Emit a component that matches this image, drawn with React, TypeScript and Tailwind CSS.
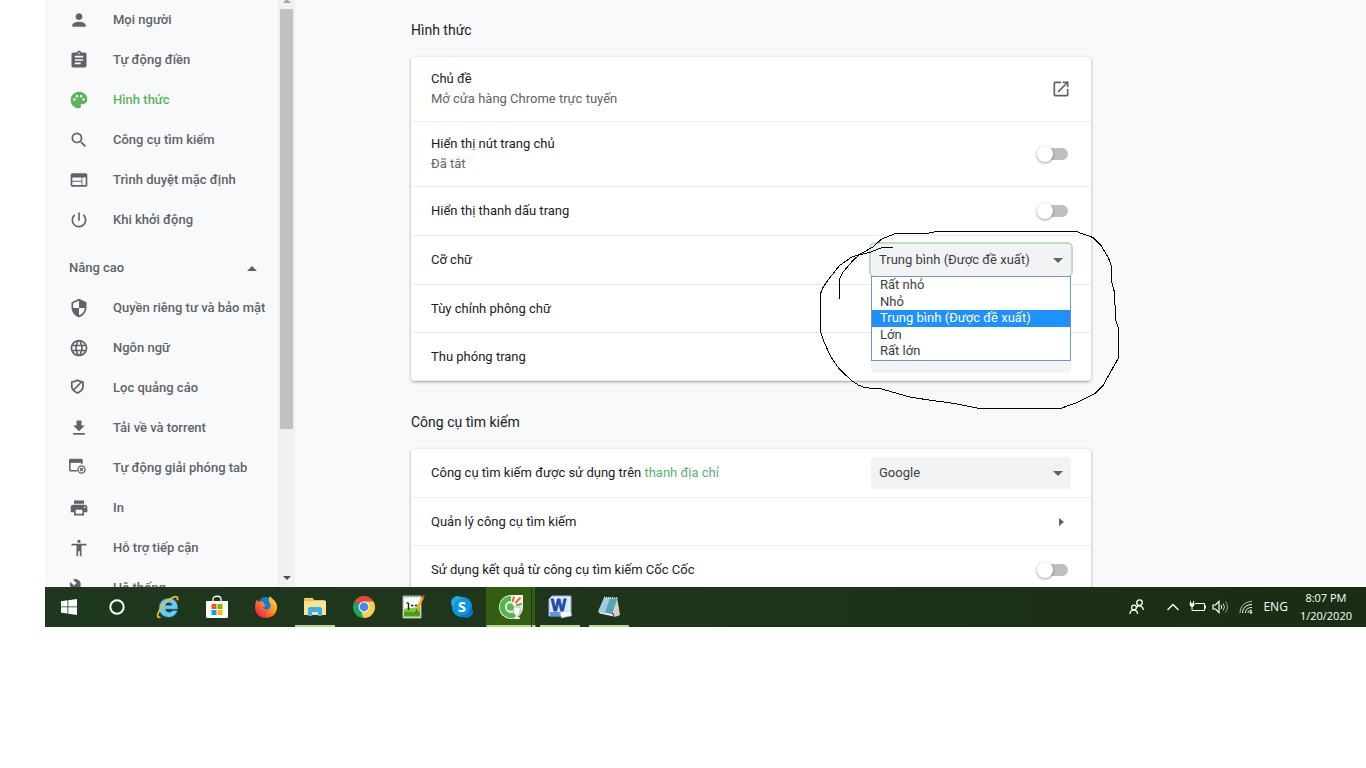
import React, { useState } from "react";
import {
  MdAccessibility,
  MdAssignment,
  MdBuild,
  MdFileDownload,
  MdLanguage,
  MdOpenInNew,
  MdPalette,
  MdPerson,
  MdPowerSettingsNew,
  MdPrint,
  MdSearch,
  MdSecurity,
  MdWeb,
} from "react-icons/md";

const AdBlockIcon = () => (
  <svg width="20" height="20" viewBox="0 0 20 20" fill="none" stroke="currentColor" strokeWidth="1.7">
    <path d="M8.5 2.300C6.500 3.500 5 3.900 2.800 4v4.500c0 2.800 2.300 4.900 5.700 6.600 3.400-1.700 5.500-3.800 5.500-6.600V4c-2.200-.1-3.500-.5-5.500-1.700z" />
    <path d="m4.500 12 8-8" />
  </svg>
);

const TabReleaseIcon = () => (
  <svg width="20" height="20" viewBox="0 0 20 20" fill="none" stroke="currentColor">
    <path d="M8 12.7H1.5A.8.8 0 0 1 .8 12V2.500h12V6" strokeWidth="1.500" />
    <path d="M.8 1.300h12v3H.8z" fill="currentColor" />
    <circle cx="12.500" cy="11.500" r="3.600" strokeWidth="1.300" />
    <path d="m11 10 3 3m0-3-3 3" strokeWidth="1.300" />
  </svg>
);

const basicItems = [
  { label: "Mọi người", icon: <MdPerson size={20} /> },
  { label: "Tự động điền", icon: <MdAssignment size={20} /> },
  { label: "Hình thức", icon: <MdPalette size={20} />, active: true },
  { label: "Công cụ tìm kiếm", icon: <MdSearch size={20} /> },
  { label: "Trình duyệt mặc định", icon: <MdWeb size={20} /> },
  { label: "Khi khởi động", icon: <MdPowerSettingsNew size={20} /> },
];

const advancedItems = [
  { label: "Quyền riêng tư và bảo mật", icon: <MdSecurity size={20} /> },
  { label: "Ngôn ngữ", icon: <MdLanguage size={20} /> },
  { label: "Lọc quảng cáo", icon: <AdBlockIcon /> },
  { label: "Tải về và torrent", icon: <MdFileDownload size={20} /> },
  { label: "Tự động giải phóng tab", icon: <TabReleaseIcon /> },
  { label: "In", icon: <MdPrint size={20} /> },
  { label: "Hỗ trợ tiếp cận", icon: <MdAccessibility size={20} /> },
  { label: "Hệ thống", icon: <MdBuild size={20} /> },
];

const fontSizes = ["Rất nhỏ", "Nhỏ", "Trung bình (Được đề xuất)", "Lớn", "Rất lớn"];

type NavItem = { label: string; icon: React.ReactNode; active?: boolean };

const NavLink: React.FC<{ item: NavItem }> = ({ item }) => (
  <a
    href="#"
    className={`flex h-10 items-center gap-6 pl-6 whitespace-nowrap ${
      item.active ? "text-[#5bb55b]" : "text-[#5f6368]"
    }`}
  >
    <span className="shrink-0">{item.icon}</span>
    {item.label}
  </a>
);

const Sidebar: React.FC = () => (
  <div className="flex w-[250px] shrink-0 overflow-hidden [contain:size]">
    <nav className="min-w-0 flex-1 text-[13px] leading-5 font-medium">
      {basicItems.map((item) => (
        <NavLink key={item.label} item={item} />
      ))}
      <button className="mt-2 flex h-10 w-full items-center justify-between pr-[21px] pl-6 text-[#5f6368]">
        Nâng cao
        <svg width="10" height="5" viewBox="0 0 10 5" fill="currentColor">
          <path d="M0 5 5 0l5 5z" />
        </svg>
      </button>
      {advancedItems.map((item) => (
        <NavLink key={item.label} item={item} />
      ))}
    </nav>

    {/* Scroll bar */}
    <div className="flex w-[17px] flex-col items-center bg-[#f1f1f1]">
      <svg className="mb-[5px]" width="8" height="4" viewBox="0 0 8 4" fill="#a3a3a3">
        <path d="M0 3 3 0h2l3 3z" />
      </svg>
      <div className="h-[420px] w-[13px] bg-[#c1c1c1]" />
      <svg className="mt-auto mb-[7px]" width="8" height="4" viewBox="0 0 8 4" fill="#505050">
        <path d="M0 0h8L4 4z" />
      </svg>
    </div>
  </div>
);

const Toggle: React.FC<{ id: string }> = ({ id }) => (
  <input
    id={id}
    type="checkbox"
    className="relative mr-[3px] h-3 w-7 appearance-none rounded-full bg-[#bdbfc1] before:absolute before:-top-0.5 before:-left-[3px] before:size-4 before:rounded-full before:bg-white before:shadow-[0_1px_3px_rgba(0,0,0,0.4)]"
  />
);

type SelectProps = {
  id: string;
  options: string[];
  value?: string;
  onChange?: (value: string) => void;
  open?: boolean;
};

const Select: React.FC<SelectProps> = ({ id, options, value, onChange, open }) => (
  <div className="relative w-[200px]">
    <select
      id={id}
      value={value}
      onChange={(e) => onChange?.(e.target.value)}
      className={`h-8 w-full appearance-none rounded bg-[#f1f3f4] pr-8 pl-2 text-[13px] text-[#3c4043] outline-none ${
        open ? "ring-2 ring-[#bcdfbc]" : ""
      }`}
    >
      {options.map((o) => (
        <option key={o}>{o}</option>
      ))}
    </select>
    <svg
      className="pointer-events-none absolute top-[14px] right-2"
      width="10"
      height="5"
      viewBox="0 0 10 5"
      fill="#5f6368"
    >
      <path d="M0 0h10L5 5z" />
    </svg>
    {open && (
      <ul
        role="listbox"
        className="absolute top-8 left-0 z-10 grid h-[85px] w-full auto-rows-fr border border-[#6d94d0] bg-white text-[13px] leading-4 text-[#3c4043]"
      >
        {options.map((o) => (
          <li
            key={o}
            role="option"
            aria-selected={o === value}
            onClick={() => onChange?.(o)}
            className={`pl-2 ${o === value ? "bg-[#1e90ff] text-white" : ""}`}
          >
            {o}
          </li>
        ))}
      </ul>
    )}
  </div>
);

// Hand drawn loop round the font size menu
const Scribble = () => (
  <svg
    className="pointer-events-none absolute top-[174px] right-[-29px] z-20"
    width="300"
    height="179"
    viewBox="30 18 900 537"
    fill="none"
    stroke="#000"
    strokeWidth="3"
    shapeRendering="crispEdges"
    aria-hidden="true"
  >
    <path d="M248 68H215L180 82 145 90 125 96 88 122 62 155 40 185 32 205V320L42 350 62 395 88 432 125 467 145 480 165 488 215 492 250 502 300 516 350 524 430 535 500 549H755L800 533 855 505 880 480 905 435 925 400V310L917 285 915 240 913 200 905 170 903 120 895 98 872 60 850 38 800 20H375L350 26H255L215 42 190 65 150 88 130 105 100 140 89 162V222" />
  </svg>
);

const rowClass = "flex items-center justify-between border-b border-[#ececec] px-5 last:border-b-0";

const Settings: React.FC = () => {
  const [fontSize, setFontSize] = useState(fontSizes[2]);

  return (
    <main className="min-w-0 flex-1 overflow-hidden pt-5 pr-6 pl-[116px] text-[13px] leading-5 text-[#202124]">
      <h2 className="mb-[17px] text-sm leading-5">Hình thức</h2>
      <section className="relative w-full max-w-[680px] rounded bg-white shadow-[0_1px_2px_rgba(60,64,67,0.3),0_1px_3px_1px_rgba(60,64,67,0.15)]">
        <div className={`${rowClass} h-[65px]`}>
          <div>
            <p>Chủ đề</p>
            <p className="text-[#5f6368]">Mở cửa hàng Chrome trực tuyến</p>
          </div>
          <a href="#" aria-label="Chủ đề" className="text-[#5f6368]">
            <MdOpenInNew size={20} />
          </a>
        </div>
        <div className={`${rowClass} h-[65px]`}>
          <label htmlFor="home-button">
            <span className="block">Hiển thị nút trang chủ</span>
            <span className="block text-[#5f6368]">Đã tắt</span>
          </label>
          <Toggle id="home-button" />
        </div>
        <div className={`${rowClass} h-[49px]`}>
          <label htmlFor="bookmarks-bar">Hiển thị thanh dấu trang</label>
          <Toggle id="bookmarks-bar" />
        </div>
        <div className={`${rowClass} h-[49px]`}>
          <label htmlFor="font-size">Cỡ chữ</label>
          <Select id="font-size" options={fontSizes} value={fontSize} onChange={setFontSize} open />
        </div>
        <div className={`${rowClass} h-12`}>
          <a href="#">Tùy chỉnh phông chữ</a>
        </div>
        <div className={`${rowClass} h-12`}>
          <label htmlFor="page-zoom">Thu phóng trang</label>
          <Select id="page-zoom" options={[""]} />
        </div>
        <Scribble />
      </section>

      <h2 className="mt-[31px] mb-[17px] text-sm leading-5">Công cụ tìm kiếm</h2>
      <section className="w-full max-w-[680px] rounded-t bg-white shadow-[0_1px_2px_rgba(60,64,67,0.3),0_1px_3px_1px_rgba(60,64,67,0.15)]">
        <div className={`${rowClass} h-[49px]`}>
          <p>
            <label htmlFor="engine">Công cụ tìm kiếm được sử dụng trên </label>
            <a href="#" className="text-[#5bb077]">
              thanh địa chỉ
            </a>
          </p>
          <Select id="engine" options={["Google"]} />
        </div>
        <div className={`${rowClass} h-12`}>
          <a href="#">Quản lý công cụ tìm kiếm</a>
          <svg className="mr-[7px]" width="5" height="8" viewBox="0 0 5 8" fill="#5f6368">
            <path d="m0 0 5 4-5 4z" />
          </svg>
        </div>
        <div className={`${rowClass} h-[41px] pt-[7px]`}>
          <label htmlFor="coccoc-results">Sử dụng kết quả từ công cụ tìm kiếm Cốc Cốc</label>
          <Toggle id="coccoc-results" />
        </div>
      </section>
    </main>
  );
};

const IeIcon = () => (
  <svg width="24" height="24" viewBox="0 0 24 24">
    <path
      d="M12.800 3.500c5.800 0 9.200 4 8.700 10.500H9.300c.2 2.200 1.700 3.300 3.700 3.300 1.700 0 2.700-.6 3.400-1.600h4.800c-1.300 4-4.300 6.300-8.600 6.300-5.600 0-9.300-3.600-9.300-9.200 0-5.500 3.900-9.300 9.500-9.300zM9.400 10.500h6.800c-.1-1.900-1.400-3-3.300-3-1.900 0-3.200 1.100-3.500 3z"
      fill="#69cbf5"
      stroke="#2f9be0"
      strokeWidth="0.600"
      fillRule="evenodd"
    />
    <path
      d="M4.500 22c-2.600 1-3.800-.6-2.300-4C4.800 12 11.500 4.500 17 2.300c3.500-1.400 5.500-.4 4.300 3"
      fill="none"
      stroke="#f1bd26"
      strokeWidth="1.800"
    />
  </svg>
);

const StoreIcon = () => (
  <svg width="24" height="24" viewBox="0 0 24 24">
    <path d="M8 7V4c0-3.700 8-3.700 8 0v3" fill="none" stroke="#fff" strokeWidth="1.300" />
    <path d="M1 6h22v15.500a1.500 1.500 0 0 1-1.500 1.500h-19A1.500 1.500 0 0 1 1 21.500z" fill="#fff" />
    <path d="M6.500 9h5v5h-5z" fill="#f25022" />
    <path d="M12.500 9h5v5h-5z" fill="#7fba00" />
    <path d="M6.500 15h5v5h-5z" fill="#00a4ef" />
    <path d="M12.500 15h5v5h-5z" fill="#ffb900" />
  </svg>
);

const FirefoxIcon = () => (
  <svg width="24" height="24" viewBox="0 0 24 24">
    <defs>
      <linearGradient id="fox" x1="1" y1="0" x2="0" y2="1">
        <stop offset="0" stopColor="#ffe433" />
        <stop offset="0.45" stopColor="#ff9418" />
        <stop offset="0.75" stopColor="#fb3c3c" />
        <stop offset="1" stopColor="#e11a72" />
      </linearGradient>
    </defs>
    <circle cx="12" cy="10.500" r="8.500" fill="#1579df" />
    <path
      d="M3 4.500 4.500 7 7 6.500c1 0 2 .3 3 1L9.500 9l2.300 1.200c-.5 1.500-2.300 1.300-2.600 2.500.7 2 3.800 2.700 5.800 1.200 2.200-1.700 2.200-4.700.5-6.400-1-1.200-1-4.500.5-6.500.5 2 6.300 4 7 10C23.500 18 18.500 23 12 23S1 18.500 1 12c0-3 .8-5.500 2-7.500z"
      fill="url(#fox)"
    />
  </svg>
);

const ExplorerIcon = () => (
  <svg width="24" height="24" viewBox="0 0 24 24">
    <path d="M1 4a1 1 0 0 1 1-1h8l1 2h11v3H1z" fill="#f0bd45" />
    <path d="M3 3.500h2M7 3.500h2" stroke="#fff3c4" />
    <path d="M1 6h22v14H1z" fill="#fde294" />
    <path d="M5 21v-7.500L6.500 12h11l1.500 1.500V21h-4v-4H9v4z" fill="#36b0ee" />
  </svg>
);

const ChromeIcon = () => (
  <svg width="24" height="24" viewBox="0 0 24 24">
    <path d="M12 12 2.470 6.500a11 11 0 0 1 19.060 0z" fill="#de4b3f" />
    <path d="M12 12V6.500h9.530A11 11 0 0 1 12 23z" fill="#fdce44" />
    <path d="M12 12v11A11 11 0 0 1 2.470 6.500z" fill="#1da362" />
    <path d="m16.500 14.500-4.900 8.500-2-4 2.400-7z" fill="#fdce44" />
    <circle cx="12" cy="12" r="5.500" fill="#f5f5f5" />
    <circle cx="12" cy="12" r="4.400" fill="#4788f4" />
  </svg>
);

const EditorIcon = () => (
  <svg width="24" height="26" viewBox="0 0 24 26">
    <path d="M2 2h18v22H2z" fill="#fbfbf5" stroke="#a9b09f" />
    <path d="M3 2.500h16" stroke="#999" strokeWidth="1.500" strokeDasharray="2 1" />
    <path d="M3 15c5-2 10 0 16-3v11H3z" fill="#7ccf3a" />
    <path d="M3 18c6-1 10 1 16-1v5H3z" fill="#4ba015" />
    <path d="M7.500 9v7M5.500 9h2M10 11.500h2.500M14 11.500h2.500" stroke="#222" strokeWidth="1.400" />
    <path d="m22 3-6.500 13" stroke="#f3a728" strokeWidth="2.400" />
    <path d="m15.800 15-1 4.500" stroke="#6b4a1a" strokeWidth="1.200" />
    <path d="m21 1.500 2.500 1.500" stroke="#b3403a" strokeWidth="2.500" />
  </svg>
);

const SkypeIcon = () => (
  <svg width="24" height="24" viewBox="0 0 24 24">
    <circle cx="12" cy="12" r="10.200" fill="#0d93df" />
    <circle cx="7.500" cy="7.500" r="6.500" fill="#1fabee" />
    <circle cx="16.500" cy="16.500" r="6.500" fill="#0877c9" />
    <circle cx="12" cy="12" r="8.500" fill="#0f96e2" />
    <text
      x="12"
      y="17"
      textAnchor="middle"
      fill="#fff"
      fontSize="15"
      fontWeight="700"
      fontFamily="Open Sans, sans-serif"
    >
      S
    </text>
  </svg>
);

const CocCocIcon = () => (
  <svg width="26" height="26" viewBox="0 0 26 26">
    <circle cx="13" cy="13" r="12" fill="#eef4ea" />
    <path d="M13 2a11 11 0 1 0 10 15h-5.500A6 6 0 1 1 13 7z" fill="#54b553" />
    <circle cx="12.500" cy="13" r="3.700" fill="#55b956" />
    <path d="M14 1h11v11H15z" fill="#f7f7f2" />
    <path d="m14.500 8 1.500-5.500M17.500 9l5-5.500" stroke="#f16a2d" strokeWidth="2" />
    <path d="m18 11.300 6-1.300" stroke="#54b553" strokeWidth="2" />
    <path
      d="M15.500 13h6.500v5c0 1.500-.8 2.500-2 2.800V23h2v2h-6.500v-2h2v-2.200c-1.200-.3-2-1.300-2-2.800z"
      fill="#fafaf7"
      stroke="#7d8c6c"
      strokeWidth="0.500"
    />
  </svg>
);

const WordIcon = () => (
  <svg width="24" height="24" viewBox="0 0 24 24">
    <path d="M4 1h19v20H1V4z" fill="#e3edfb" stroke="#8baee0" />
    <path d="M2 17h17v4H2z" fill="#5f97e2" />
    <text
      x="10.500"
      y="15.500"
      textAnchor="middle"
      fill="#1a4ba8"
      stroke="#1a4ba8"
      strokeWidth="0.800"
      fontSize="16"
      fontWeight="700"
      fontFamily="Liberation Sans, sans-serif"
    >
      W
    </text>
    <path d="m12 17.500 10-2 1.500 5-10 2.500z" fill="#fff" stroke="#aac2e6" strokeWidth="0.600" />
  </svg>
);

const NotepadIcon = () => (
  <svg width="24" height="24" viewBox="0 0 24 24">
    <path d="m20 2 3 18-5 2-3-6z" fill="#d8d2c6" />
    <path d="M7 2.500 20.500 3 15 19 1 16.500z" fill="#9ccfdc" />
    <path d="m13 3 7.500.2L15 19l-7-1.500z" fill="#3f8fa8" opacity="0.700" />
    <path d="m1 16.500 14 2.500 2 2.500-14-3z" fill="#edf5f6" />
    <path d="M7 2.500 20.500 3" stroke="#e5e5e5" strokeWidth="1.500" strokeDasharray="1 1" />
  </svg>
);

const apps = [
  { name: "Internet Explorer", icon: <IeIcon /> },
  { name: "Microsoft Store", icon: <StoreIcon /> },
  { name: "Firefox", icon: <FirefoxIcon /> },
  { name: "File Explorer", icon: <ExplorerIcon />, running: true },
  { name: "Chrome", icon: <ChromeIcon /> },
  { name: "Notepad++", icon: <EditorIcon /> },
  { name: "Skype", icon: <SkypeIcon /> },
  { name: "Cốc Cốc", icon: <CocCocIcon />, running: true, active: true },
  { name: "Word", icon: <WordIcon />, running: true },
  { name: "Notepad", icon: <NotepadIcon />, running: true },
];

const Taskbar: React.FC = () => (
  <footer className="flex h-10 items-center bg-linear-to-r from-[#1d371d] via-[#1f3519] to-[#182d12] text-white">
    <button aria-label="Start" className="flex h-10 w-12 items-center justify-center">
      <svg width="16" height="16" viewBox="0 0 16 16" fill="#fff">
        <path d="M0 2.200 6.500 1.300v6.200H0zM7.300 1.200 16 0v7.500H7.300zM0 8.300h6.500v6.300L0 13.700zM7.300 8.300H16V16l-8.700-1.200z" />
      </svg>
    </button>
    <button aria-label="Cortana" className="mr-0.5 flex h-10 w-12 items-center justify-center">
      <svg width="16" height="16" viewBox="0 0 16 16" fill="none" stroke="#fff" strokeWidth="2">
        <circle cx="8" cy="8" r="6.700" />
      </svg>
    </button>
    {apps.map((app) => (
      <button
        key={app.name}
        aria-label={app.name}
        className={`relative flex h-10 w-[49px] items-center justify-center ${
          app.active ? "bg-[#335d10]" : ""
        }`}
      >
        {app.icon}
        {app.running && (
          <span
            className={`absolute bottom-0 left-1/2 h-0.5 -translate-x-1/2 bg-[#b4d88b] ${
              app.active ? "w-full" : "w-10"
            }`}
          />
        )}
        {app.active && <span className="absolute inset-y-0 right-[3px] w-px bg-[#1f3b0c]" />}
      </button>
    ))}

    {/* System tray */}
    <div className="ml-auto flex items-center pr-[14px] font-['Open_Sans',sans-serif] text-[11px]">
      <svg width="16" height="16" viewBox="0 0 16 16" fill="none" stroke="#fff" strokeWidth="1.300">
        <circle cx="10.500" cy="3.700" r="2.800" />
        <circle cx="5" cy="8.500" r="2.400" />
        <path d="M1 15c0-5.300 7.500-5.300 7.500 0M8 8c2.500-2.200 6-.8 6.500 3" />
      </svg>
      <svg className="ml-[22px]" width="12" height="8" viewBox="0 0 12 8" fill="none" stroke="#fff" strokeWidth="1.300">
        <path d="m.5 7 5.500-5.500L11.500 7" />
      </svg>
      <svg className="ml-[10px]" width="17" height="14" viewBox="0 0 17 14" fill="none" stroke="#fff">
        <path d="M6 3.500h9.500v7H5M16.500 5.500v3" />
        <path d="M1.500 1v2M4.500 1v2M3 7v3.500h2" />
        <path d="M1 3.500h4V5L4 6.500H2L1 5z" fill="#fff" />
      </svg>
      <svg className="ml-[6px]" width="17" height="14" viewBox="0 0 17 14" fill="none" stroke="#fff">
        <path d="M1 5h2.500L7 1.500v11L3.500 9H1z" strokeWidth="1.200" />
        <path d="M9 5q1.500 2 0 4" />
        <path d="M11 3.500q3 3.500 0 7" opacity="0.8" />
        <path d="M13.500 1.500q4 5.500 0 11" opacity="0.5" />
      </svg>
      <svg className="ml-[10px]" width="14" height="14" viewBox="0 0 14 14" fill="none" stroke="#fff">
        <path d="M1 13C1 6.500 6 1.500 13 1.500" opacity="0.7" />
        <path d="M3.500 13c0-5 4-8.500 9.500-8.500M6.500 13c0-3.500 2.500-5.500 6.500-5.500M9 13c0-1.700 1.500-2.800 4-2.800" />
        <circle cx="12" cy="12.500" r="1.200" fill="#fff" stroke="none" />
      </svg>
      <span className="ml-[10px] text-xs">ENG</span>
      <p className="ml-3 text-center leading-[18px]">
        8:07 PM
        <br />
        1/20/2020
      </p>
    </div>
  </footer>
);

const App: React.FC = () => {
  return (
    <div className="min-h-screen overflow-hidden bg-white pl-[45px] font-[Roboto,sans-serif]">
      <div className="flex bg-[#f8f9fb]">
        <Sidebar />
        <Settings />
      </div>
      <Taskbar />
    </div>
  );
};

export default App;
